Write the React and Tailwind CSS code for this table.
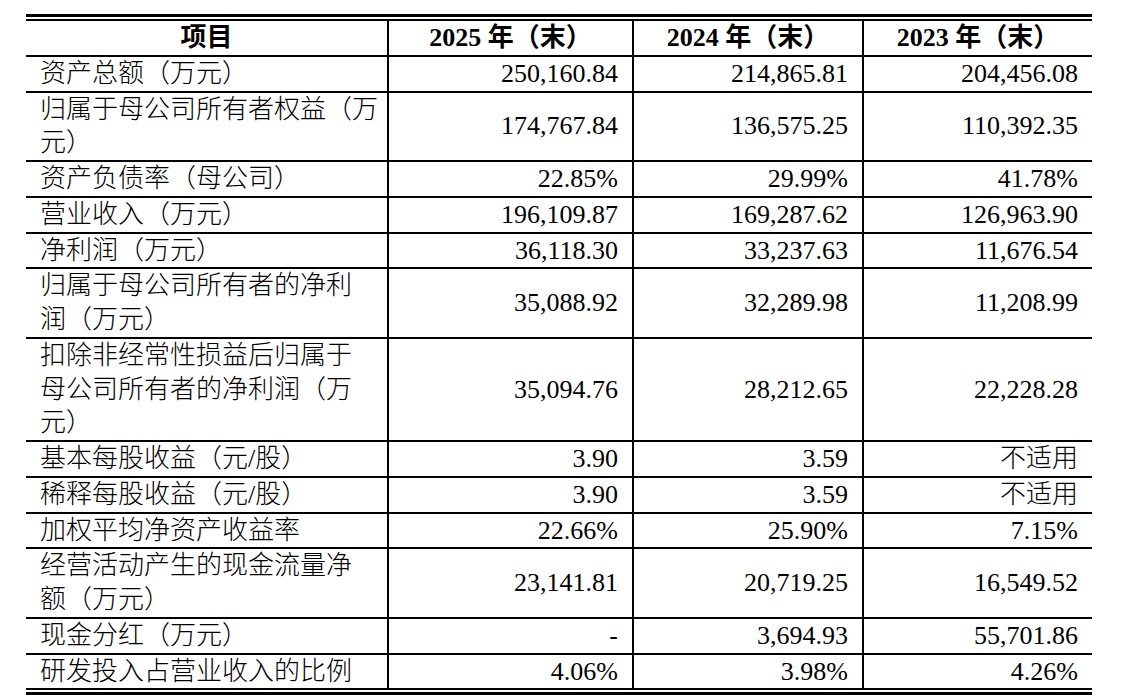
import React from "react";

const rows = [
  { label: ["资产总额（万元）"], v: ["250,160.84", "214,865.81", "204,456.08"] },
  { label: ["归属于母公司所有者权益（万", "元）"], v: ["174,767.84", "136,575.25", "110,392.35"] },
  { label: ["资产负债率（母公司）"], v: ["22.85%", "29.99%", "41.78%"] },
  { label: ["营业收入（万元）"], v: ["196,109.87", "169,287.62", "126,963.90"] },
  { label: ["净利润（万元）"], v: ["36,118.30", "33,237.63", "11,676.54"] },
  { label: ["归属于母公司所有者的净利", "润（万元）"], v: ["35,088.92", "32,289.98", "11,208.99"] },
  {
    label: ["扣除非经常性损益后归属于", "母公司所有者的净利润（万", "元）"],
    v: ["35,094.76", "28,212.65", "22,228.28"],
  },
  { label: ["基本每股收益（元/股）"], v: ["3.90", "3.59", "不适用"] },
  { label: ["稀释每股收益（元/股）"], v: ["3.90", "3.59", "不适用"] },
  { label: ["加权平均净资产收益率"], v: ["22.66%", "25.90%", "7.15%"] },
  { label: ["经营活动产生的现金流量净", "额（万元）"], v: ["23,141.81", "20,719.25", "16,549.52"] },
  { label: ["现金分红（万元）"], v: ["-", "3,694.93", "55,701.86"] },
  { label: ["研发投入占营业收入的比例"], v: ["4.06%", "3.98%", "4.26%"] },
];

const heads = ["2025", "2024", "2023"];

export default function App() {
  return (
    <div className="min-h-[698px] bg-white pt-[14px] pl-[26px] text-black font-['Liberation_Serif','Noto_Sans_CJK_SC',serif]">
      <div className="w-[1066px]">
        <div className="h-[3px] bg-black" />
        <table className="mt-[2px] w-[1066px] table-fixed border-collapse border-t-2 border-black text-[26px] leading-[33.75px]">
          <colgroup>
            <col className="w-[362px]" />
            <col className="w-[245px]" />
            <col className="w-[230px]" />
            <col className="w-[229px]" />
          </colgroup>
          <thead>
            <tr className="border-b-2 border-black">
              <th className="p-0 text-center font-bold">项目</th>
              {heads.map((h) => (
                <th key={h} className="border-l-2 border-black p-0 text-center font-bold">
                  {h} 年（末）
                </th>
              ))}
            </tr>
          </thead>
          <tbody>
            {rows.map((r, i) => (
              <tr key={i} className="border-b-2 border-black">
                <td className="whitespace-nowrap p-0 pl-[14px] align-middle font-light">
                  {r.label.map((l, j) => (
                    <div key={j}>{l}</div>
                  ))}
                </td>
                {r.v.map((v, j) => (
                  <td key={j} className="border-l-2 border-black p-0 pr-[14px] text-right align-middle font-light">
                    {v}
                  </td>
                ))}
              </tr>
            ))}
          </tbody>
        </table>
        <div className="mt-[2px] h-[3px] bg-black" />
      </div>
    </div>
  );
}
